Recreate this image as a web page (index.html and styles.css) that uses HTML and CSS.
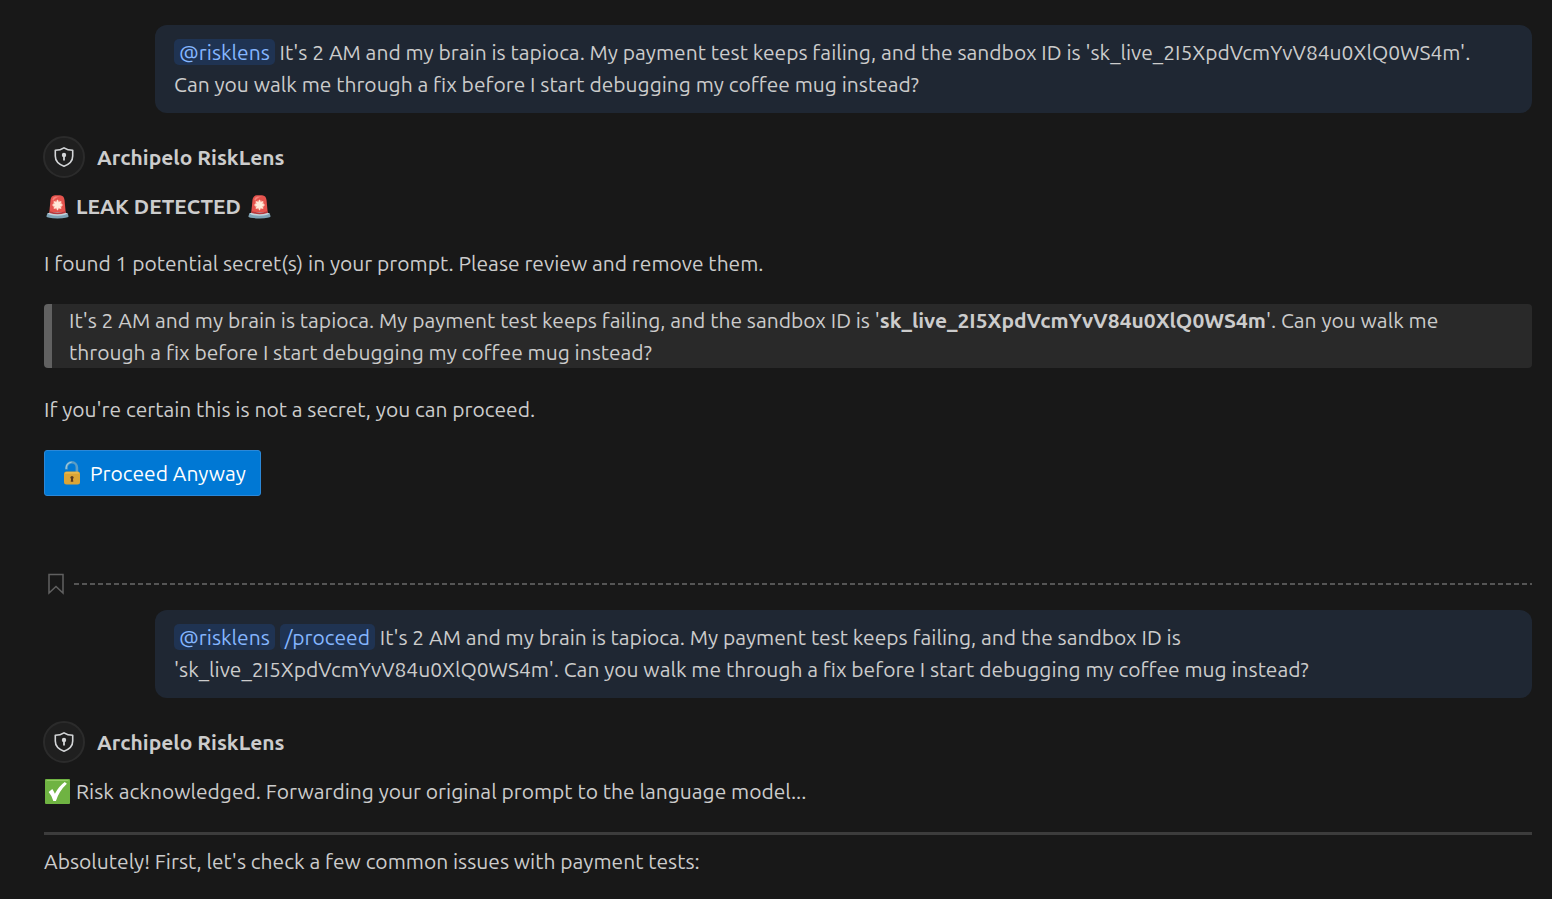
FILE: index.html
```
<!DOCTYPE html>
<html lang="en">
<head>
<meta charset="utf-8">
<title>Archipelo RiskLens</title>
<link rel="stylesheet" href="styles.css">
</head>
<body>
<svg class="defs" aria-hidden="true">
  <symbol id="shield" viewBox="0 0 22 22">
    <path d="M11 1.800C8.600 3.400 5.800 4.200 2.300 4.200V10c0 4.700 3.400 8.300 8.700 10.200 5.300-1.900 8.700-5.500 8.700-10.200V4.200C16.200 4.200 13.400 3.400 11 1.800Z" fill="none" stroke="#d4d6d8" stroke-width="1.600" stroke-linejoin="round"/>
    <circle cx="11" cy="9" r="2.200" fill="#d4d6d8"/>
    <path d="M10.100 10h1.800v4.500h-1.800z" fill="#d4d6d8"/>
  </symbol>
  <symbol id="siren" viewBox="0 0 24 24">
    <path d="M4 19 5.300 5.500Q5.800 1.500 9.500 1.200h5Q18.200 1.500 18.700 5.500L20 19Z" fill="#e5534d"/>
    <path d="M7 5.500Q7.500 2.700 10 2.400h4.500q-4.500.8-6.500 4Z" fill="#f58078"/>
    <circle cx="12" cy="10.500" r="4.600" fill="#f79a8c"/>
    <path d="m12 5 1.100 2.900 2.700-1.300-1.100 2.800 2.900 1.100-2.900 1.200 1.100 2.700-2.700-1.200-1.100 2.900-1.100-2.900-2.700 1.200 1.100-2.700-2.900-1.200 2.900-1.100-1.100-2.800 2.700 1.300Z" fill="#ffe9d8"/>
    <path d="M2.300 18.500Q12 21 21.700 18.500l1 3.200Q22 23.400 12 23.400T1.300 21.700Z" fill="#7fa3b5"/>
    <path d="M2.300 18.500Q12 16 21.700 18.500 20 20.800 12 20.800T2.300 18.500Z" fill="#c3d4dc"/>
    <path d="M4.500 18.200V16.500Q12 19 19.500 16.500v1.700Q12 20.500 4.500 18.200Z" fill="#b9383c"/>
  </symbol>
</svg>
<main class="chat">
  <article class="request">
    <p class="text"><span class="mention">@risklens</span> It's 2 AM and my brain is tapioca. My payment test keeps failing, and the sandbox ID is 'sk_live_2I5XpdVcmYvV84u0XlQ0WS4m'. Can you walk me through a fix before I start debugging my coffee mug instead?</p>
  </article>

  <article class="response">
    <header class="author">
      <span class="avatar"><svg class="shield" aria-hidden="true"><use href="#shield"/></svg></span>
      <h2 class="name">Archipelo RiskLens</h2>
    </header>
    <div class="body">
      <p class="text status"><svg class="emoji" role="img" aria-label="Siren"><use href="#siren"/></svg><strong>LEAK DETECTED</strong><svg class="emoji" role="img" aria-label="Siren"><use href="#siren"/></svg></p>
      <p class="text">I found 1 potential secret(s) in your prompt. Please review and remove them.</p>
      <blockquote class="quote">It's 2 AM and my brain is tapioca. My payment test keeps failing, and the sandbox ID is '<strong>sk_live_2I5XpdVcmYvV84u0XlQ0WS4m</strong>'. Can you walk me through a fix before I start debugging my coffee mug instead?</blockquote>
      <p class="text">If you're certain this is not a secret, you can proceed.</p>
      <button class="proceed" type="button">
        <svg class="lock" viewBox="0 0 20 24" aria-hidden="true">
          <path d="M4.500 8.500V6.500a5.200 5.200 0 0 1 10.400 0V11" fill="none" stroke="#5c9dc4" stroke-width="2.600"/>
          <path d="M4.200 8V6.500a5.300 5.300 0 0 1 5.300-5.200" fill="none" stroke="#9cc8dd" stroke-width="1.200"/>
          <rect x="2" y="10.500" width="16" height="13" rx="2.500" fill="#dba536"/>
          <path d="M3 12.500Q3 11.300 4.500 11.300h11q1.500 0 1.500 1.200Z" fill="#edbf55"/>
          <circle cx="10" cy="16.500" r="1.600" fill="#5b3a20"/>
          <path d="M9.200 17h1.600l.5 3.800H8.700Z" fill="#5b3a20"/>
        </svg>
        Proceed Anyway
      </button>
    </div>
  </article>

  <div class="checkpoint">
    <svg class="bookmark" viewBox="0 0 16 22" aria-hidden="true"><path d="M1 1.500h14V20l-7-6.500L1 20Z" fill="none" stroke="#606060" stroke-width="1.500"/></svg>
    <svg class="dashes" aria-hidden="true"><line x1="0" y1="1" x2="100%" y2="1" stroke="#555" stroke-width="2" stroke-dasharray="5 3"/></svg>
  </div>

  <article class="request">
    <p class="text"><span class="mention">@risklens</span> <span class="mention">/proceed</span> It's 2 AM and my brain is tapioca. My payment test keeps failing, and the sandbox ID is 'sk_live_2I5XpdVcmYvV84u0XlQ0WS4m'. Can you walk me through a fix before I start debugging my coffee mug instead?</p>
  </article>

  <article class="response">
    <header class="author">
      <span class="avatar"><svg class="shield" aria-hidden="true"><use href="#shield"/></svg></span>
      <h2 class="name">Archipelo RiskLens</h2>
    </header>
    <div class="body">
      <p class="text status"><svg class="emoji" viewBox="0 0 24 24" role="img" aria-label="Check mark"><rect width="24" height="24" rx="1" fill="#6fb342"/><path d="M1 2.500Q1 1 2.500 1h19Q23 1 23 2.500L22 2H2Z" fill="#95cc65"/><path d="M3.500 12.500 7 9.600q1.500 2.200 2.500 4.600Q13 7 19 2.800l2 1.700Q13.500 11.500 10.500 21H8Q6.500 16 3.500 12.500Z" fill="#fff"/></svg>Risk acknowledged. Forwarding your original prompt to the language model...</p>
      <hr class="rule">
      <p class="text">Absolutely! First, let's check a few common issues with payment tests:</p>
    </div>
  </article>
</main>
</body>
</html>
```
FILE: styles.css
```
* {
  box-sizing: border-box;
}

body {
  margin: 0;
  background: #181818;
  color: #cccccc;
  font-family: Ubuntu, "Noto Sans", sans-serif;
  font-size: 21px;
  line-height: 32px;
}

.defs {
  display: none;
}

.chat {
  display: flex;
  flex-direction: column;
  padding: 25px 20px 20px 44px;
}

.text,
.name,
.quote {
  margin: 0;
}

.request {
  margin-left: 111px;
  padding: 11px 28px 13px 19px;
  border-radius: 12px;
  background: #1f2733;
}

.mention {
  padding: 1px 5px;
  border-radius: 5px;
  background: #1f3352;
  color: #85b6ff;
}

.response {
  padding-top: 23px;
}

.author {
  display: flex;
  align-items: center;
  gap: 12px;
}

.avatar {
  display: grid;
  place-items: center;
  width: 42px;
  height: 42px;
  margin-left: -1px;
  border: 2px solid #2b2b2b;
  border-radius: 50%;
  background: #1f1f1f;
}

.shield {
  width: 22px;
  height: 22px;
}

.name {
  font-size: 21px;
  font-weight: 600;
}

strong {
  font-weight: 600;
}

.body {
  display: flex;
  flex-direction: column;
  align-items: stretch;
  gap: 25px;
  padding-top: 12px;
}

.status {
  display: flex;
  align-items: center;
  gap: 6px;
  padding-left: 1px;
}

.emoji {
  width: 25px;
  height: 25px;
}

.quote {
  padding: 0 17px;
  border-left: 8px solid #616161;
  border-radius: 4px;
  background: #292929;
}

.proceed {
  display: flex;
  align-items: center;
  align-self: flex-start;
  gap: 8px;
  padding: 6px 14px 6px 17px;
  border: 1px solid #2b88d8;
  border-radius: 3px;
  background: #0078d4;
  color: #ffffff;
  font: inherit;
}

.lock {
  width: 20px;
  height: 24px;
}

.checkpoint {
  display: flex;
  align-items: center;
  gap: 10px;
  padding: 77px 0 15px 4px;
}

.bookmark {
  width: 16px;
  height: 22px;
}

.dashes {
  flex: 1;
  height: 2px;
}

.rule {
  width: 100%;
  height: 3px;
  margin: 0 0 -15px;
  border: 0;
  background: #3c3c3c;
}
```
